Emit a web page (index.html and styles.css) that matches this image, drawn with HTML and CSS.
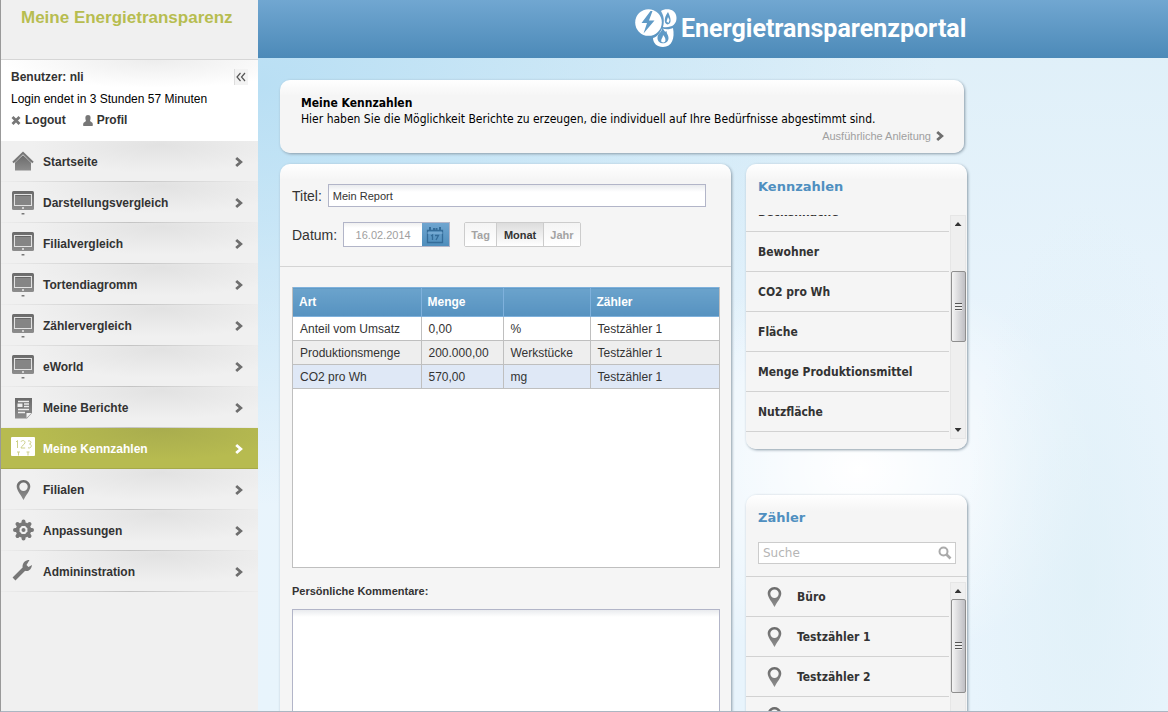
FILE: index.html
```html
<!DOCTYPE html>
<html lang="de">
<head>
<meta charset="utf-8">
<title>Energietransparenzportal</title>
<link rel="stylesheet" href="styles.css">
</head>
<body>
<svg class="defs" aria-hidden="true">
  <defs>
    <linearGradient id="steel" x1="0" y1="0" x2="0" y2="1"><stop offset="0" stop-color="#6a6a6a"/><stop offset="1" stop-color="#8d8d8d"/></linearGradient>
  </defs>
  <symbol id="i-arrow" viewBox="0 0 8 12"><path d="M1.200 2L5.800 6L1.200 10" fill="none" stroke="currentColor" stroke-width="2.800"/></symbol>
  <symbol id="i-home" viewBox="0 0 24 24"><path d="M4 11V20.500H20V11L12 5Z" fill="url(#steel)"/><path d="M2 12.500L12 3L22 12.500" fill="none" stroke="#777" stroke-width="2"/><path d="M3.500 13L12 5L20.500 13" fill="none" stroke="#c4c4c4" stroke-width=".7"/></symbol>
  <symbol id="i-screen" viewBox="0 0 24 24"><rect x="1" y="0" width="22" height="19" rx="1.500" fill="url(#steel)"/><rect x="3.500" y="3.500" width="17" height="11" fill="#858585" stroke="#e2e2e2"/><path d="M4.500 4.500H19.500" stroke="#666"/><circle cx="12" cy="17" r="1" fill="#e8e8e8"/><rect x="10.500" y="22" width="3" height="1.500" rx=".5" fill="#777"/></symbol>
  <symbol id="i-report" viewBox="0 0 24 24"><path d="M4 2H21V17L16 22.500H4Z" fill="url(#steel)"/><path d="M7 5.500H18M13 8H18M13 10.500H18M7 13.500H18M7 16.500H14" stroke="#eee" stroke-width="1.300"/><rect x="6.500" y="7.500" width="5" height="3.500" fill="#eee"/><path d="M15.500 22V17H20.500Z" fill="#f5f5f5"/></symbol>
  <symbol id="i-pin" viewBox="0 0 24 24"><path fill-rule="evenodd" d="M12.500 2C8.500 2 5.700 5 5.700 8.500C5.700 12.500 10 17 12.500 22C15 17 19.300 12.500 19.300 8.500C19.300 5 16.500 2 12.500 2ZM12.500 4.500A4.200 4.200 0 1 1 12.500 12.900A4.200 4.200 0 1 1 12.500 4.500Z" fill="url(#steel)"/></symbol>
  <symbol id="i-gear" viewBox="0 0 24 24"><g stroke="#777" stroke-width="4" stroke-linecap="round"><path d="M12.500 2.500V5M12.500 17V19.500M4 11H6.500M18.500 11H21M6.500 5L8.300 6.800M16.700 15.200L18.500 17M18.500 5L16.700 6.800M8.300 15.200L6.500 17"/></g><circle cx="12.500" cy="11" r="6" fill="none" stroke="#777" stroke-width="3.500"/><circle cx="12.500" cy="11" r="2" fill="#777"/></symbol>
  <symbol id="i-wrench" viewBox="0 0 24 24"><path d="M3 19L14 8" stroke="#777" stroke-width="4"/><path d="M18.500 0C14.500 0 11.500 2.500 11.500 7L14.500 11C18 11.500 20.500 9 21 5L17.500 7L15.500 5Z" fill="#777"/></symbol>
  <symbol id="i-digits" viewBox="0 0 24 24"><rect y="0" width="24" height="19" rx="1" fill="#fff"/><path d="M5 5L6.500 3.500V11M10 5C10.300 3 14 3 14 5.500C14 7.500 10 9 10 11H14.200M17 4C20 3 21 6.500 18.500 7C21.500 7.500 20.500 12 17 10.800" fill="none" stroke="#cdd08a"/><path d="M6 14.500H9V15.500H8V18.500H7V15.500H6ZM15.500 14.500H18.500V15.500H17.500V18.500H16.500V15.500H15.500Z" fill="#cdd08a"/></symbol>
</svg>
<div class="app">
  <aside class="side">
    <h1 class="side-title">Meine Energietransparenz</h1>
    <section class="user">
      <div class="user-top"><strong>Benutzer: nli</strong><button class="fold" aria-label="Menü einklappen"><svg viewBox="0 0 10 10"><path d="M4.500 1L1 5L4.500 9M9 1L5.500 5L9 9" fill="none" stroke="#555" stroke-width="1.200"/></svg></button></div>
      <p class="user-session">Login endet in 3 Stunden 57 Minuten</p>
      <div class="user-links">
        <a href="#"><svg viewBox="0 0 10 10"><path d="M1.500 1.500L8.500 8.500M8.500 1.500L1.500 8.500" stroke="#777" stroke-width="2.800"/></svg>Logout</a>
        <a href="#"><svg viewBox="0 0 10 11"><path d="M5 0C2 0 2 3 3 6L1 7.500C0 8 0 11 .5 11H9.500C10 11 10 8 9 7.500L7 6C8 3 8 0 5 0Z" fill="#777"/></svg>Profil</a>
      </div>
    </section>
    <nav>
      <ul class="menu">
        <li><a href="#"><svg class="ico"><use href="#i-home"/></svg><span>Startseite</span><svg class="go"><use href="#i-arrow"/></svg></a></li>
        <li><a href="#"><svg class="ico"><use href="#i-screen"/></svg><span>Darstellungsvergleich</span><svg class="go"><use href="#i-arrow"/></svg></a></li>
        <li><a href="#"><svg class="ico"><use href="#i-screen"/></svg><span>Filialvergleich</span><svg class="go"><use href="#i-arrow"/></svg></a></li>
        <li><a href="#"><svg class="ico"><use href="#i-screen"/></svg><span>Tortendiagromm</span><svg class="go"><use href="#i-arrow"/></svg></a></li>
        <li><a href="#"><svg class="ico"><use href="#i-screen"/></svg><span>Zählervergleich</span><svg class="go"><use href="#i-arrow"/></svg></a></li>
        <li><a href="#"><svg class="ico"><use href="#i-screen"/></svg><span>eWorld</span><svg class="go"><use href="#i-arrow"/></svg></a></li>
        <li><a href="#"><svg class="ico"><use href="#i-report"/></svg><span>Meine Berichte</span><svg class="go"><use href="#i-arrow"/></svg></a></li>
        <li class="active"><a href="#" aria-current="page"><svg class="ico"><use href="#i-digits"/></svg><span>Meine Kennzahlen</span><svg class="go"><use href="#i-arrow"/></svg></a></li>
        <li><a href="#"><svg class="ico"><use href="#i-pin"/></svg><span>Filialen</span><svg class="go"><use href="#i-arrow"/></svg></a></li>
        <li><a href="#"><svg class="ico"><use href="#i-gear"/></svg><span>Anpassungen</span><svg class="go"><use href="#i-arrow"/></svg></a></li>
        <li><a href="#"><svg class="ico"><use href="#i-wrench"/></svg><span>Admininstration</span><svg class="go"><use href="#i-arrow"/></svg></a></li>
      </ul>
    </nav>
  </aside>
  <div class="stage">
    <header class="brand">
      <svg class="logo" viewBox="0 0 42 40" aria-hidden="true">
        <circle cx="13.500" cy="13.500" r="13.300" fill="#fff"/>
        <path d="M15.500 2L6.500 14H12L8.500 24.500L19.500 11.500H14L17.500 2Z" fill="#5f9ac6"/>
        <path d="M26 2C30 -1 41.500 -1 41.500 9C41.500 16 36 19 28 18C29.500 12 29 7 26 2Z" fill="#fff"/>
        <path d="M33 3C28 10 29.500 15 32.500 15.500C36.500 15 36.500 10 33 3Z" fill="#5f9ac6"/>
        <path d="M33 8L31.500 12.500L33.500 14L34.500 11Z" fill="#fff"/>
        <path d="M18 29C22 28 25 24 27 19.500C32 21 36 20 38 19C40 29 37 38 28 38C22 38 18 34 18 29Z" fill="#fff"/>
        <path d="M27 18.500C28 23 22 24 22.500 29.500C23 36 33.500 36 33.500 29C33.500 26 31.500 25 31.500 22C29.500 24 29.500 21 27 18.500Z" fill="#5f9ac6"/>
        <path d="M28 26C28 29 25.500 30 26.500 33C31 35 32 30 28 26Z" fill="#fff"/>
      </svg>
      <span>Energietransparenzportal</span>
    </header>
    <main class="content">
      <section class="card intro">
        <h2>Meine Kennzahlen</h2>
        <p>Hier haben Sie die Möglichkeit Berichte zu erzeugen, die individuell auf Ihre Bedürfnisse abgestimmt sind.</p>
        <a href="#">Ausführliche Anleitung<svg class="go"><use href="#i-arrow"/></svg></a>
      </section>
      <div class="columns">
        <form class="card report">
          <div class="report-head">
            <div class="row"><label for="titel">Titel:</label><input class="field" id="titel" type="text" value="Mein Report"></div>
            <div class="row">
              <label for="datum">Datum:</label>
              <div class="date"><input id="datum" type="text" value="16.02.2014"><button type="button" aria-label="Kalender öffnen"><svg viewBox="0 0 18 18"><g fill="none" stroke="#346c99" stroke-width="1.300"><path d="M1.500 4.500H16.500V16.500H1.500Z"/><path d="M4 1V5M8 2V4M10.500 2V4M14 1V5" stroke-width="2"/><path d="M1.500 7H16.500" stroke="#7fb0d8"/><path d="M5 10L6.500 9V14M9 9.500H12.500L10 14"/></g></svg></button></div>
              <div class="period"><button type="button">Tag</button><button type="button" class="on" aria-pressed="true">Monat</button><button type="button">Jahr</button></div>
            </div>
          </div>
          <div class="report-body">
            <div class="grid">
              <table>
                <colgroup><col class="c-art"><col class="c-menge"><col class="c-unit"><col></colgroup>
                <thead><tr><th>Art</th><th>Menge</th><th></th><th>Zähler</th></tr></thead>
                <tbody>
                  <tr><td>Anteil vom Umsatz</td><td>0,00</td><td>%</td><td>Testzähler 1</td></tr>
                  <tr><td>Produktionsmenge</td><td>200.000,00</td><td>Werkstücke</td><td>Testzähler 1</td></tr>
                  <tr><td>CO2 pro Wh</td><td>570,00</td><td>mg</td><td>Testzähler 1</td></tr>
                </tbody>
              </table>
            </div>
            <label class="note-label" for="note">Persönliche Kommentare:</label>
            <textarea class="field" id="note"></textarea>
          </div>
        </form>
        <div class="lists">
          <section class="card">
            <h2>Kennzahlen</h2>
            <div class="scroller">
              <ul class="scrolled"><li>Beckenfläche</li><li>Bewohner</li><li>CO2 pro Wh</li><li>Fläche</li><li>Menge Produktionsmittel</li><li>Nutzfläche</li></ul>
              <div class="bar" aria-hidden="true"><i class="up"></i><i class="thumb mid"></i><i class="down"></i></div>
            </div>
          </section>
          <section class="card meters">
            <h2>Zähler</h2>
            <div class="search"><input type="search" placeholder="Suche" aria-label="Zähler suchen"><svg viewBox="0 0 14 14"><circle cx="5.500" cy="5.500" r="4" fill="none" stroke="#aaa" stroke-width="2"/><path d="M8.500 8.500L12.500 12.500" stroke="#aaa" stroke-width="2.600"/></svg></div>
            <div class="scroller">
              <ul><li><svg class="ico"><use href="#i-pin"/></svg>Büro</li><li><svg class="ico"><use href="#i-pin"/></svg>Testzähler 1</li><li><svg class="ico"><use href="#i-pin"/></svg>Testzähler 2</li><li><svg class="ico"><use href="#i-pin"/></svg></li></ul>
              <div class="bar" aria-hidden="true"><i class="up"></i><i class="thumb top"></i><i class="down"></i></div>
            </div>
          </section>
        </div>
      </div>
    </main>
  </div>
</div>
</body>
</html>
```
FILE: styles.css
```css
* { box-sizing: border-box; }
body, h1, h2, p, ul { margin: 0; padding: 0; }
ul { list-style: none; }
body { font: 12px/16px "Liberation Sans", Arial, sans-serif; color: #333; }
a { color: inherit; text-decoration: none; }
button, input, textarea { font: inherit; color: inherit; margin: 0; }
.defs { position: absolute; width: 0; height: 0; }

.app { display: flex; height: 100vh; overflow: hidden; border-left: 1px solid #999; border-bottom: 1px solid #abb6c2; }

.side { flex: 0 0 257px; min-width: 0; background: #f0f0f0; }
.side-title { height: 60px; padding: 6px 20px; border-bottom: 1px solid #d6d6d6; font-size: 17px; line-height: 24px; color: #b7bd50; white-space: nowrap; }
.user { height: 81px; padding: 9px 10px 0; background: radial-gradient(ellipse 60% 28px at 60% 0, #ededed, #fff); }
.user-top { display: flex; justify-content: space-between; height: 21px; }
.user-session { color: #000; height: 22px; line-height: 18px; white-space: nowrap; }
.fold { width: 14px; height: 16px; padding: 3px 1px; border: 0; border-left: 1px solid #ddd; background: #f3f3f3; }
.fold svg { display: block; width: 10px; height: 10px; }
.user-links { display: flex; gap: 17px; font-weight: bold; }
.user-links a { display: flex; align-items: center; gap: 4px; }
.user-links svg { width: 10px; height: 11px; }

.menu a { display: flex; align-items: center; gap: 8px; height: 41px; padding: 1px 15px 0 10px; font-weight: bold; border-bottom: 1px solid; border-image: linear-gradient(90deg, #ededed, #c4c4c4 50%, #ededed) 1; background: radial-gradient(ellipse 50% 28px at 62% 4px, #e2e2e2, #f0f0f0); }
.menu span { flex: 1; }
.ico { width: 24px; height: 24px; flex: none; }
.go { width: 8px; height: 12px; flex: none; color: #6e6e6e; }
.menu .active a { color: #fff; border-image: none; border-color: #a6aa48; background: radial-gradient(ellipse 50% 30px at 62% 2px, #a9ad4e, #b7bb50); }
.active .go { color: #fff; }

.stage { flex: 1; min-width: 0; background:
  radial-gradient(ellipse 120px 380px at 91% 82%, #ddeff6a0, #ddeff600),
  radial-gradient(ellipse 240px 200px at 66% 66%, #fff, #fff0),
  radial-gradient(ellipse 680px 420px at 0 12%, #b9dff4, #b9dff400),
  linear-gradient(#deeff8, #e9f4fc 50%, #e8f4fc); }
.brand { display: flex; align-items: center; justify-content: flex-start; gap: 4px; height: 58px; padding-left: 377px; background: linear-gradient(#71a7d1, #4c8ab8); color: #fff; font: bold 25px/36px Roboto, "Liberation Sans", sans-serif; }
.logo { width: 42px; height: 40px; flex: none; }

.content { padding: 22px; }
.card { border-radius: 10px; background: linear-gradient(#fff, #f5f5f5 16px); box-shadow: 1px 1px 3px #8a9ba8; }
.intro { max-width: 684px; height: 73px; padding: 15px 20px 0 21px; color: #000; font: 12px/16px "DejaVu Sans Condensed", "DejaVu Sans", sans-serif; }
.intro h2 { font-size: 12px; line-height: 16px; }
.intro p { white-space: nowrap; }
.intro a { display: flex; justify-content: flex-end; align-items: center; gap: 5px; height: 18px; font: 11px/16px "Liberation Sans", Arial, sans-serif; color: #a0a0a0; }

.columns { display: grid; grid-template-columns: minmax(0, 451fr) minmax(0, 221fr); gap: 15px; max-width: 687px; margin-top: 11px; align-items: start; }
.report-head { display: flex; flex-direction: column; gap: 15px; padding: 20px 25px 19px 12px; border-bottom: 1px solid #d4d4d4; }
.row { display: flex; align-items: center; gap: 6px; font-size: 14px; }
.field { border: 1px solid #b2b5c8; background: linear-gradient(#e9ebee, #fff 7px); font-size: 11px; }
.row .field { flex: 1; min-width: 0; height: 23px; padding: 0 4px; }
.date { display: flex; height: 25px; border: 1px solid #b2b5c8; font-size: 11px; color: #a0a0a0; }
.date input { width: 78px; padding: 0; border: 0; text-align: center; background: linear-gradient(#f0f0f0, #fff 5px); }
.date button { width: 27px; padding: 3px 4px; border: 0; background: linear-gradient(#6fa5d0, #4f8ebc); }
.date svg { display: block; width: 18px; height: 18px; }
.period { display: flex; height: 25px; margin-left: 8px; border: 1px solid #ccc; border-radius: 2px; font-size: 11px; font-weight: bold; color: #a3a3a3; }
.period button { padding: 0 6px; border: 0; background: linear-gradient(#f4f4f4, #fff); }
.period .on { padding: 0 7px; color: #333; border: solid #ccc; border-width: 0 1px; background: linear-gradient(#dcdcdc, #fff); }
.report-body { padding: 20px 11px 20px 12px; }
.grid { height: 281px; border: 1px solid #bfbfbf; border-top: 0; background: #fff; }
table { width: 100%; border-collapse: collapse; table-layout: fixed; }
.c-art { width: 128px; }
.c-menge { width: 82px; }
.c-unit { width: 87px; }
th { height: 29px; padding: 0 6px; text-align: left; color: #fff; background: linear-gradient(#6ba3cc, #5692c0); border: 1px solid #7fb1dc; border-width: 1px 0 1px 1px; }
th:first-child, td:first-child { border-left: 0; }
td { height: 24px; padding: 0 7px; border: solid #bfbfbf; border-width: 0 0 1px 1px; white-space: nowrap; }
tbody tr:nth-child(2) { background: #eee; }
tbody tr:nth-child(3) { background: #dfe8f6; }
.note-label { display: block; margin: 15px 0 10px; font-size: 11px; font-weight: bold; }
textarea { display: block; width: 100%; height: 140px; resize: none; }

.lists { display: grid; gap: 46px; font: bold 12px/16px "DejaVu Sans Condensed", "DejaVu Sans", sans-serif; }
.lists .card { padding-bottom: 10px; }
.lists h2 { height: 51px; padding: 15px 12px 0; font: bold 13px/16px "DejaVu Sans", sans-serif; color: #4f8fc0; }
.scroller { display: flex; gap: 1px; height: 224px; padding-right: 1px; }
.scroller ul { flex: 1; height: 100%; overflow: hidden; }
.scroller li { display: flex; flex: none; align-items: center; height: 40px; padding: 0 12px; border-bottom: 1px solid #d2d2d2; }
.scroller .scrolled { display: flex; flex-direction: column; justify-content: flex-end; padding-bottom: 7px; }
.meters h2 { height: 47px; }
.search { display: flex; align-items: center; height: 22px; margin: 0 11px 0 12px; padding: 0 3px 0 4px; border: 1px solid #ccc; background: #fff; }
.search input { flex: 1; min-width: 0; padding: 0; border: 0; outline: 0; background: none; font: 12px/16px "DejaVu Sans", sans-serif; }
.search input::placeholder { color: #b5b5b5; opacity: 1; }
.search svg { width: 14px; height: 14px; }
.meters .scroller { margin-top: 12px; border-top: 1px solid #d2d2d2; }
.meters li { gap: 11px; padding-left: 16px; }
.bar { display: flex; flex-direction: column; align-items: center; width: 16px; border: 1px solid #e6e6e6; background: #efefef; }
.meters .bar { margin-top: 5px; }
.up, .down { width: 7px; height: 4px; margin: 6px 0; background: #333; clip-path: polygon(50% 0, 100% 100%, 0 100%); }
.down { margin-top: auto; clip-path: polygon(0 0, 100% 0, 50% 100%); }
.thumb { width: 15px; height: 71px; border: 1px solid #8e8e8e; border-radius: 2px; background:
  repeating-linear-gradient(#555 0 1px, #eee 1px 3px) center / 7px 8px no-repeat,
  linear-gradient(90deg, #f4f4f4, #dcdcde 45%, #bfbfc4); }
.mid { margin-top: 39px; }
.top { height: 94px; }
```
